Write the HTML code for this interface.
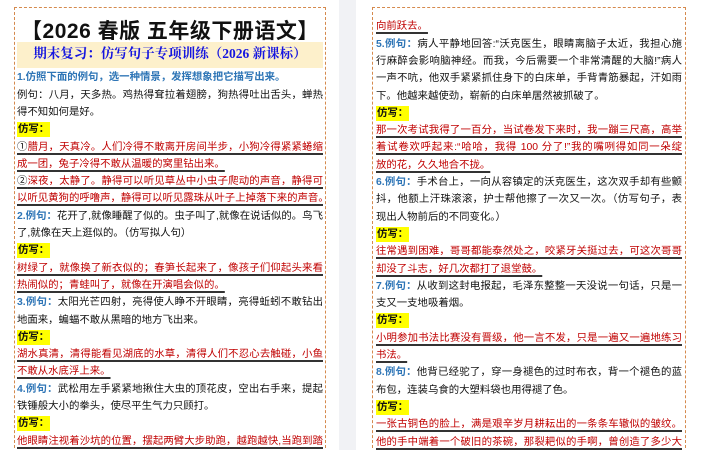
<!DOCTYPE html>
<html style="overflow:hidden;width:704px;height:450px"><head><meta charset="utf-8"><style>
*{margin:0;padding:0;box-sizing:border-box}
body{width:704px;height:450px;overflow:hidden;background:#fff;position:relative;font-family:"Liberation Sans","Noto Sans CJK SC",sans-serif;font-size:10.4px;color:#111}
.gap{position:absolute;left:339px;top:0;width:17px;height:450px;background:#f1f2f5}
.frame{position:absolute;border:1.5px dashed #d58a4e;top:7px;height:446px}
.col{position:absolute;width:306px}
.l{height:17.3px;line-height:17.3px;white-space:nowrap;overflow:hidden;text-align:justify;text-align-last:justify}
.e{text-align-last:left}
.b{color:#2e75b6;font-weight:bold}
.r{color:#c00000}
.u{text-decoration:underline;text-decoration-color:#333;text-decoration-thickness:1.5px;text-underline-offset:3px}
.y{background:#ffff00;font-weight:bold;padding:2px 1px}
</style></head><body>
<div class="gap"></div>
<div class="frame" style="left:14px;width:312px"></div>
<div class="frame" style="left:372px;width:314px"></div>

<div style="position:absolute;left:17px;top:15px;width:306px;text-align:center;font:bold 21px 'Liberation Sans','Noto Sans CJK SC',sans-serif;letter-spacing:0.5px;color:#111">【2026 春版 五年级下册语文】</div>
<div style="position:absolute;left:17px;top:42px;width:306px;height:26px;background:#fdf0cb;text-align:center;line-height:26px;font:bold 13.5px 'Liberation Serif','Noto Serif CJK SC',serif;color:#1515e0">期末复习：仿写句子专项训练（2026 新课标）</div>

<div class="col" style="left:17px;top:69.4px">
<div class="l b e">1.仿照下面的例句，选一种情景，发挥想象把它描写出来。</div>
<div class="l">例句：八月，天多热。鸡热得耷拉着翅膀，狗热得吐出舌头，蝉热</div>
<div class="l e">得不知如何是好。</div>
<div class="l e"><span class="y">仿写：</span></div>
<div class="l u">①<span class="r">腊月，天真冷。人们冷得不敢离开房间半步，小狗冷得紧紧蜷缩</span></div>
<div class="l e u r">成一团，兔子冷得不敢从温暖的窝里钻出来。</div>
<div class="l u">②<span class="r">深夜，太静了。静得可以听见草丛中小虫子爬动的声音，静得可</span></div>
<div class="l u r">以听见黄狗的呼噜声，静得可以听见露珠从叶子上掉落下来的声音。</div>
<div class="l"><span class="b">2.例句：</span>花开了,就像睡醒了似的。虫子叫了,就像在说话似的。鸟飞</div>
<div class="l e">了,就像在天上逛似的。（仿写拟人句）</div>
<div class="l e"><span class="y">仿写：</span></div>
<div class="l u r">树绿了，就像换了新衣似的；春笋长起来了，像孩子们仰起头来看</div>
<div class="l e u r">热闹似的；青蛙叫了，就像在开演唱会似的。</div>
<div class="l"><span class="b">3.例句：</span>太阳光芒四射，亮得使人睁不开眼睛，亮得蚯蚓不敢钻出</div>
<div class="l e">地面来，蝙蝠不敢从黑暗的地方飞出来。</div>
<div class="l e"><span class="y">仿写：</span></div>
<div class="l u r">湖水真清，清得能看见湖底的水草，清得人们不忍心去触碰，小鱼</div>
<div class="l e u r">不敢从水底浮上来。</div>
<div class="l"><span class="b">4.例句：</span>武松用左手紧紧地揪住大虫的顶花皮，空出右手来，提起</div>
<div class="l e">铁锤般大小的拳头，使尽平生气力只顾打。</div>
<div class="l e"><span class="y">仿写：</span></div>
<div class="l u r">他眼睛注视着沙坑的位置，摆起两臂大步助跑，越跑越快,当跑到踏</div>
<div class="l u r">跳线上的时候，他左脚猛地用力一蹬，身子像飞燕一样腾空而起</div>
</div>

<div class="col" style="left:376px;top:18.4px">
<div class="l e u r">向前跃去。</div>
<div class="l"><span class="b">5.例句：</span>病人平静地回答:“沃克医生，眼睛离脑子太近，我担心施</div>
<div class="l">行麻醉会影响脑神经。而我，今后需要一个非常清醒的大脑!”病人</div>
<div class="l">一声不吭，他双手紧紧抓住身下的白床单，手背青筋暴起，汗如雨</div>
<div class="l e">下。他越来越使劲，崭新的白床单居然被抓破了。</div>
<div class="l e"><span class="y">仿写：</span></div>
<div class="l u r">那一次考试我得了一百分，当试卷发下来时，我一蹦三尺高，高举</div>
<div class="l u r">着试卷欢呼起来:“哈哈，我得 100 分了!”我的嘴咧得如同一朵绽</div>
<div class="l e u r">放的花，久久地合不拢。</div>
<div class="l"><span class="b">6.例句：</span>手术台上，一向从容镇定的沃克医生，这次双手却有些颤</div>
<div class="l">抖，他额上汗珠滚滚，护士帮他擦了一次又一次。（仿写句子，表</div>
<div class="l e">现出人物前后的不同变化。）</div>
<div class="l e"><span class="y">仿写：</span></div>
<div class="l u r">往常遇到困难，哥哥都能泰然处之，咬紧牙关挺过去，可这次哥哥</div>
<div class="l e u r">却没了斗志，好几次都打了退堂鼓。</div>
<div class="l"><span class="b">7.例句：</span>从收到这封电报起，毛泽东整整一天没说一句话，只是一</div>
<div class="l e">支又一支地吸着烟。</div>
<div class="l e"><span class="y">仿写：</span></div>
<div class="l u r">小明参加书法比赛没有晋级，他一言不发，只是一遍又一遍地练习</div>
<div class="l e u r">书法。</div>
<div class="l"><span class="b">8.例句：</span>他背已经驼了，穿一身褪色的过时布衣，背一个褪色的蓝</div>
<div class="l e">布包，连装乌食的大塑料袋也用得褪了色。</div>
<div class="l e"><span class="y">仿写：</span></div>
<div class="l u r">一张古铜色的脸上，满是艰辛岁月耕耘出的一条条车辙似的皱纹。</div>
<div class="l u r">他的手中端着一个破旧的茶碗，那裂耙似的手啊，曾创造了多少大</div>
</div>
</body></html>
